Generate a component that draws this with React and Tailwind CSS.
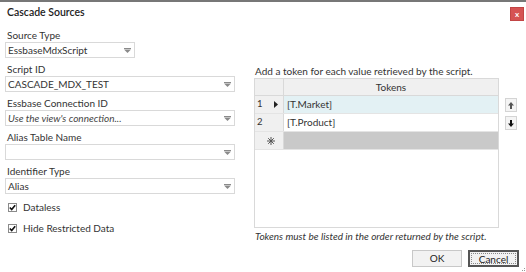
import React from "react";

// 드롭다운 화살표
function Arrow() {
  return (
    <svg width="7" height="5" viewBox="0 0 7 5" className="shrink-0">
      <rect x="0" y="0" width="7" height="1" fill="#8a8a8a" />
      <path d="M0 1.5 L7 1.5 L3.5 5 Z" fill="#8a8a8a" />
    </svg>
  );
}

function Select({ value, italic, width = "w-full" }) {
  return (
    <div className={`${width} h-[16px] border border-[#d9d9d9] bg-white flex items-center pl-[2px] pr-[3px]`}>
      <span className={`grow text-[10px] leading-[14px] text-[#333] ${italic ? "italic text-[#444]" : ""}`}>{value}</span>
      <Arrow />
    </div>
  );
}

function Field({ label, children }) {
  return (
    <div className="flex flex-col">
      <div className="h-[14px] text-[10px] leading-[14px] text-[#333] pl-[2px]">{label}</div>
      {children}
    </div>
  );
}

function Check({ label }) {
  return (
    <div className="flex items-center h-[14px] pl-[3px]">
      <div className="w-[9px] h-[9px] border border-[#8a8a8a] bg-white flex items-center justify-center">
        <svg width="7" height="7" viewBox="0 0 7 7">
          <path d="M0.8 3.5 L2.7 5.6 L6.2 1.2" stroke="#111" strokeWidth="1.6" fill="none" />
        </svg>
      </div>
      <span className="ml-[6px] text-[10px] leading-[14px] text-[#333]">{label}</span>
    </div>
  );
}

// 새 행 표시 (별표)
function NewRowMark() {
  return (
    <svg width="8" height="8" viewBox="0 0 8 8">
      <g stroke="#555" strokeWidth="1">
        <line x1="4" y1="0" x2="4" y2="8" />
        <line x1="0" y1="4" x2="8" y2="4" />
        <line x1="1.2" y1="1.2" x2="6.8" y2="6.8" />
        <line x1="6.8" y1="1.2" x2="1.2" y2="6.8" />
      </g>
    </svg>
  );
}

export default function App() {
  return (
    <div
      className="w-[526px] h-[272px] bg-white border-t-2 border-[#777] relative overflow-hidden"
      style={{ fontFamily: "Lato, 'Noto Sans', sans-serif" }}
    >
      {/* 제목줄 */}
      <div className="flex items-center justify-between h-[22px] pl-[7px] pr-[2px]">
        <span className="text-[10.5px] font-semibold text-[#222]">Cascade Sources</span>
        <div className="w-[14px] h-[14px] mt-[2px] bg-[#d65353] border border-[#c24545] flex items-center justify-center text-white text-[8px] font-bold leading-none">
          x
        </div>
      </div>

      <div className="flex pl-[5px]">
        {/* 왼쪽 폼 */}
        <div className="w-[230px] flex flex-col gap-[4px] mt-[4px]">
          <Field label="Source Type">
            <Select value="EssbaseMdxScript" width="w-[130px]" />
          </Field>
          <Field label="Script ID">
            <Select value="CASCADE_MDX_TEST" />
          </Field>
          <Field label="Essbase Connection ID">
            <Select value="Use the view's connection..." italic />
          </Field>
          <Field label="Alias Table Name">
            <Select value="" />
          </Field>
          <Field label="Identifier Type">
            <Select value="Alias" />
          </Field>
          <div className="flex flex-col gap-[7px] mt-[2px]">
            <Check label="Dataless" />
            <Check label="Hide Restricted Data" />
          </div>
        </div>

        {/* 오른쪽 토큰 */}
        <div className="w-[265px] ml-[19px] mt-[40px] flex flex-col">
          <div className="h-[14px] text-[10px] leading-[14px] text-[#333] pl-[1px]">
            Add a token for each value retrieved by the script.
          </div>
          <div className="flex">
            <div className="w-[245px] h-[150px] border border-[#d9d9d9] bg-white flex flex-col">
              <div className="flex h-[17px] bg-[#f0f0f0] border-b border-[#d9d9d9]">
                <div className="w-[29px] border-r border-[#d9d9d9]" />
                <div className="grow text-center text-[10px] leading-[16px] text-[#333]">Tokens</div>
              </div>
              <div className="flex h-[18px] border-b border-[#e4e4e4]">
                <div className="w-[29px] bg-[#f0f0f0] border-r border-[#d9d9d9] flex items-center justify-between pl-[2px] pr-[5px]">
                  <span className="text-[9.5px] text-[#333]">1</span>
                  <svg width="4" height="7" viewBox="0 0 4 7">
                    <path d="M0 0 L4 3.5 L0 7 Z" fill="#222" />
                  </svg>
                </div>
                <div className="grow bg-[#e3f1f4] text-[10px] leading-[17px] text-[#333] pl-[3px]">[T.Market]</div>
              </div>
              <div className="flex h-[18px] border-b border-[#e4e4e4]">
                <div className="w-[29px] bg-[#f0f0f0] border-r border-[#d9d9d9] flex items-center pl-[2px]">
                  <span className="text-[9.5px] text-[#333]">2</span>
                </div>
                <div className="grow bg-white text-[10px] leading-[17px] text-[#333] pl-[3px]">[T.Product]</div>
              </div>
              <div className="flex h-[18px] border-b border-[#e4e4e4]">
                <div className="w-[29px] bg-[#f0f0f0] border-r border-[#d9d9d9] flex items-center justify-center pl-[3px]">
                  <NewRowMark />
                </div>
                <div className="grow bg-[#c9c9c9]" />
              </div>
            </div>
            {/* 이동 버튼 */}
            <div className="flex flex-col gap-[4px] ml-[6px] mt-[20px]">
              <div className="w-[12px] h-[14px] border border-[#d4d4d4] bg-[#f4f4f4] flex items-center justify-center">
                <svg width="6" height="7" viewBox="0 0 6 7">
                  <path d="M3 0 L6 3.5 L4 3.5 L4 7 L2 7 L2 3.5 L0 3.5 Z" fill="#555" />
                </svg>
              </div>
              <div className="w-[12px] h-[14px] border border-[#d4d4d4] bg-[#f4f4f4] flex items-center justify-center">
                <svg width="6" height="7" viewBox="0 0 6 7">
                  <path d="M3 7 L6 3.5 L4 3.5 L4 0 L2 0 L2 3.5 L0 3.5 Z" fill="#111" />
                </svg>
              </div>
            </div>
          </div>
          <div className="h-[14px] mt-[1px] text-[10px] leading-[14px] italic text-[#333] pl-[1px]">
            Tokens must be listed in the order returned by the script.
          </div>
          <div className="flex justify-end gap-[6px] mt-[7px]">
            <div className="w-[50px] h-[17px] border border-[#c8c8c8] bg-[#f2f2f2] flex items-center justify-center text-[10px] text-[#222]">
              OK
            </div>
            <div className="w-[51px] h-[17px] border-2 border-[#555] bg-[#f2f2f2] p-[1px]">
              <div className="w-full h-full border border-dotted border-[#888] flex items-center justify-center text-[10px] leading-none text-[#222]">
                Cancel
              </div>
            </div>
          </div>
        </div>
      </div>

      {/* 크기 조절 손잡이 */}
      <div className="absolute right-[1px] bottom-[1px] grid grid-cols-2 gap-[1px]">
        <div />
        <div className="w-[1px] h-[1px] bg-[#999]" />
        <div className="w-[1px] h-[1px] bg-[#999]" />
        <div className="w-[1px] h-[1px] bg-[#999]" />
      </div>
    </div>
  );
}
